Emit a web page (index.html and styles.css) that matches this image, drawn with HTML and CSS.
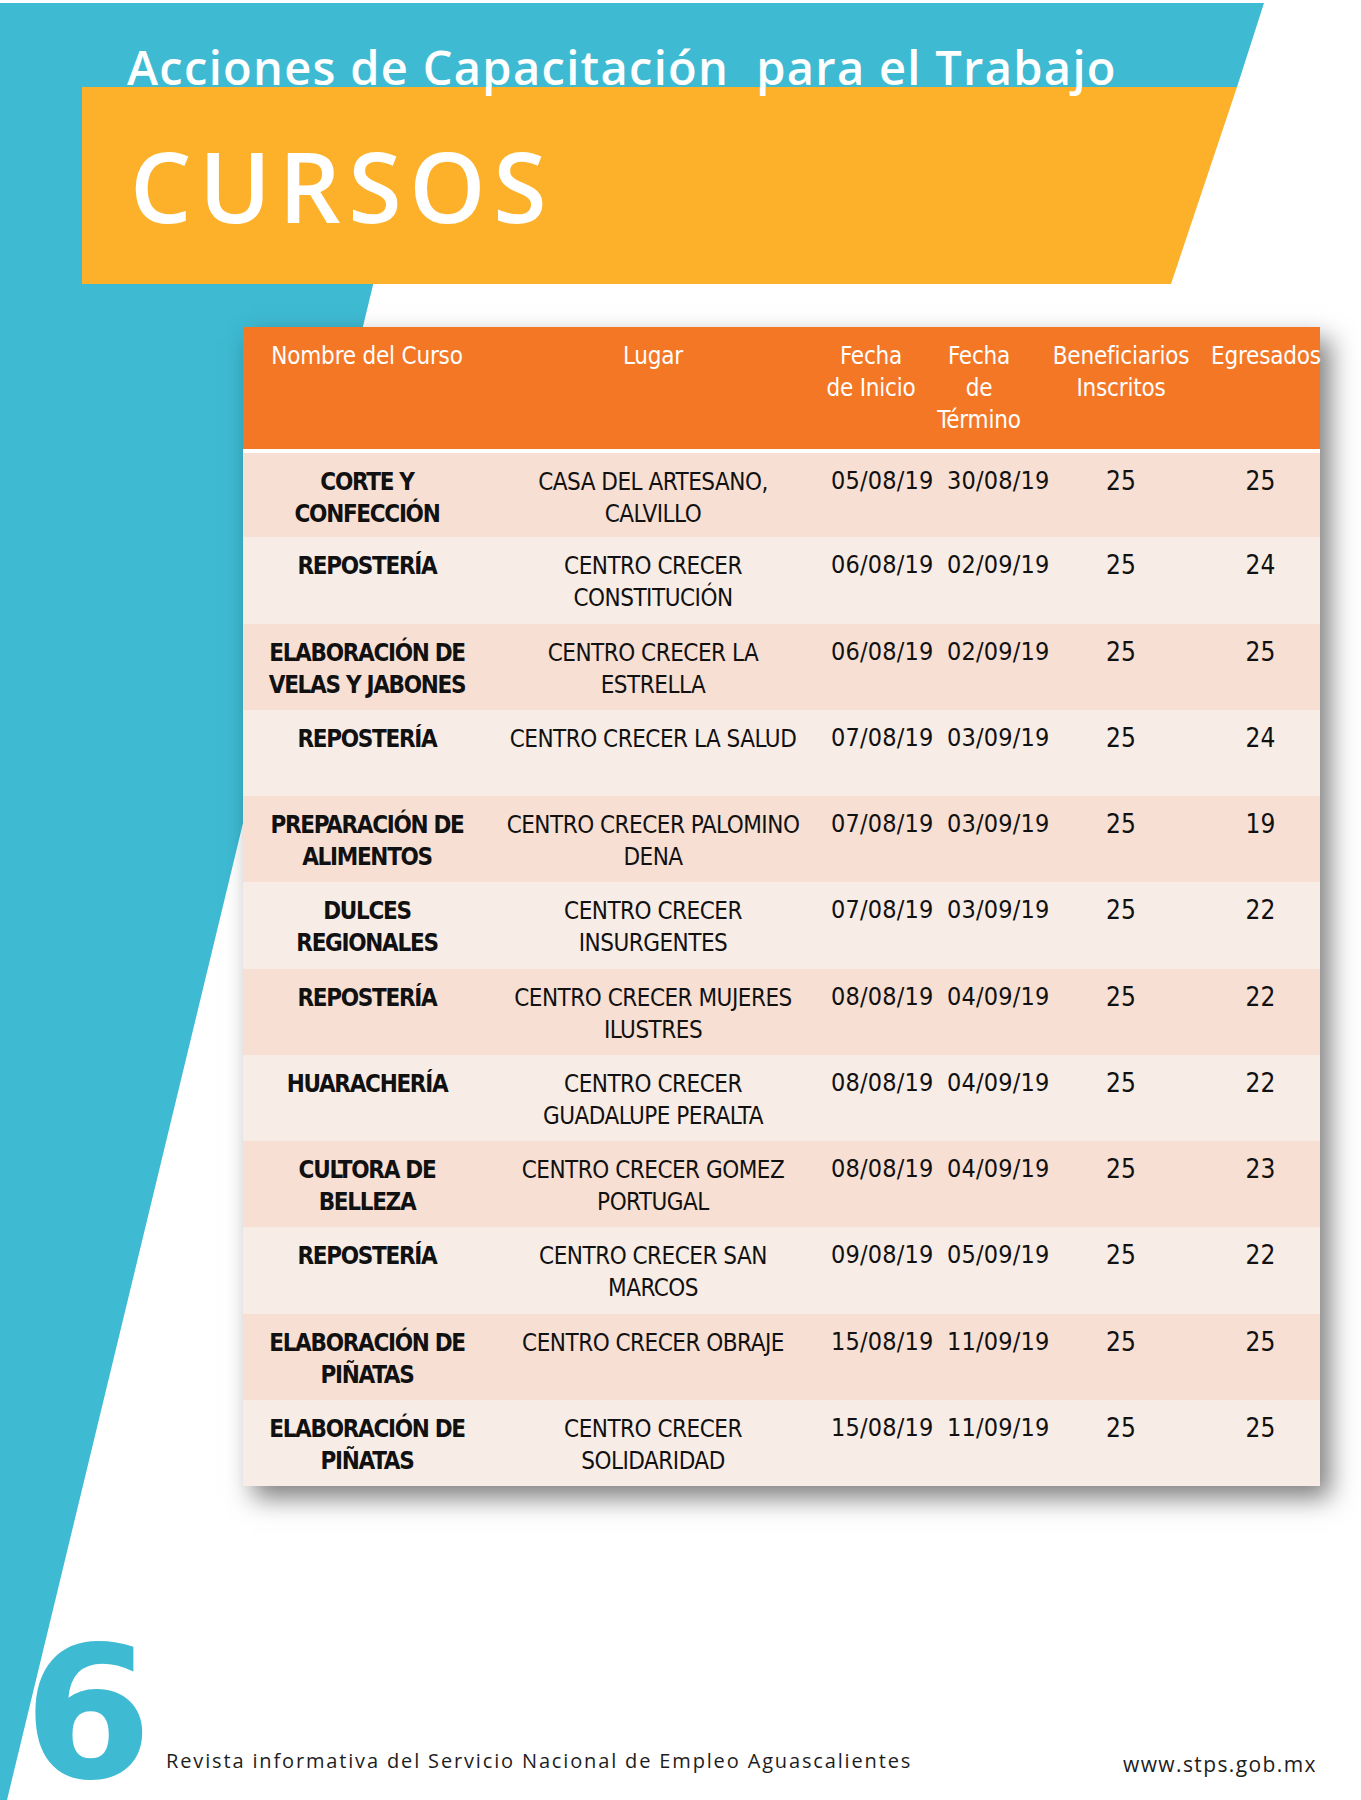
FILE: index.html
```html
<!DOCTYPE html>
<html lang="es">
<head>
<meta charset="utf-8">
<title>Cursos</title>
<link rel="stylesheet" href="styles.css">
</head>
<body>
<div class="page">
  <svg class="bg" width="1361" height="1800" viewBox="0 0 1361 1800" aria-hidden="true">
    <polygon class="bg-blue" points="0,3 1264,3 1237,87 1100,150 381,250 373,285 7,1800 0,1800"/>
    <polygon class="bg-yellow" points="82,87 1237,87 1171,284 82,284"/>
  </svg>

  <header class="masthead">
    <h2 class="kicker">Acciones de Capacitación&nbsp; para el Trabajo</h2>
    <h1 class="title">CURSOS</h1>
  </header>

  <table class="courses">
    <colgroup>
      <col class="c-name"><col class="c-place"><col class="c-start"><col class="c-end"><col class="c-ben"><col class="c-egr">
    </colgroup>
    <thead>
      <tr>
        <th>Nombre del Curso</th>
        <th>Lugar</th>
        <th>Fecha<br>de Inicio</th>
        <th>Fecha<br>de<br>Término</th>
        <th>Beneficiarios<br>Inscritos</th>
        <th>Egresados</th>
      </tr>
    </thead>
    <tbody>
      <tr><td class="name">CORTE Y<br>CONFECCIÓN</td><td class="place">CASA DEL ARTESANO,<br>CALVILLO</td><td class="d1">05/08/19</td><td class="d2">30/08/19</td><td class="num">25</td><td class="num egr">25</td></tr>
      <tr><td class="name">REPOSTERÍA</td><td class="place">CENTRO CRECER<br>CONSTITUCIÓN</td><td class="d1">06/08/19</td><td class="d2">02/09/19</td><td class="num">25</td><td class="num egr">24</td></tr>
      <tr><td class="name">ELABORACIÓN DE<br>VELAS Y JABONES</td><td class="place">CENTRO CRECER LA<br>ESTRELLA</td><td class="d1">06/08/19</td><td class="d2">02/09/19</td><td class="num">25</td><td class="num egr">25</td></tr>
      <tr><td class="name">REPOSTERÍA</td><td class="place">CENTRO CRECER LA SALUD</td><td class="d1">07/08/19</td><td class="d2">03/09/19</td><td class="num">25</td><td class="num egr">24</td></tr>
      <tr><td class="name">PREPARACIÓN DE<br>ALIMENTOS</td><td class="place">CENTRO CRECER PALOMINO<br>DENA</td><td class="d1">07/08/19</td><td class="d2">03/09/19</td><td class="num">25</td><td class="num egr">19</td></tr>
      <tr><td class="name">DULCES<br>REGIONALES</td><td class="place">CENTRO CRECER<br>INSURGENTES</td><td class="d1">07/08/19</td><td class="d2">03/09/19</td><td class="num">25</td><td class="num egr">22</td></tr>
      <tr><td class="name">REPOSTERÍA</td><td class="place">CENTRO CRECER MUJERES<br>ILUSTRES</td><td class="d1">08/08/19</td><td class="d2">04/09/19</td><td class="num">25</td><td class="num egr">22</td></tr>
      <tr><td class="name">HUARACHERÍA</td><td class="place">CENTRO CRECER<br>GUADALUPE PERALTA</td><td class="d1">08/08/19</td><td class="d2">04/09/19</td><td class="num">25</td><td class="num egr">22</td></tr>
      <tr><td class="name">CULTORA DE<br>BELLEZA</td><td class="place">CENTRO CRECER GOMEZ<br>PORTUGAL</td><td class="d1">08/08/19</td><td class="d2">04/09/19</td><td class="num">25</td><td class="num egr">23</td></tr>
      <tr><td class="name">REPOSTERÍA</td><td class="place">CENTRO CRECER SAN<br>MARCOS</td><td class="d1">09/08/19</td><td class="d2">05/09/19</td><td class="num">25</td><td class="num egr">22</td></tr>
      <tr><td class="name">ELABORACIÓN DE<br>PIÑATAS</td><td class="place">CENTRO CRECER OBRAJE</td><td class="d1">15/08/19</td><td class="d2">11/09/19</td><td class="num">25</td><td class="num egr">25</td></tr>
      <tr><td class="name">ELABORACIÓN DE<br>PIÑATAS</td><td class="place">CENTRO CRECER<br>SOLIDARIDAD</td><td class="d1">15/08/19</td><td class="d2">11/09/19</td><td class="num">25</td><td class="num egr">25</td></tr>
    </tbody>
  </table>

  <footer class="foot">
    <span class="page-num">6</span>
    <span class="mag">Revista informativa del Servicio Nacional de Empleo Aguascalientes</span>
    <span class="url">www.stps.gob.mx</span>
  </footer>
</div>
</body>
</html>
```

FILE: styles.css
```css
* { box-sizing: border-box; }

html, body {
  margin: 0;
  padding: 0;
  background: #ffffff;
}

.page {
  position: relative;
  width: 1361px;
  height: 1800px;
  overflow: hidden;
  display: flex;
  flex-direction: column;
  font-family: "Open Sans", "Noto Sans", sans-serif;
}

.bg {
  position: absolute;
  left: 0;
  top: 0;
  z-index: 0;
}

.bg-blue { fill: #3ebad3; }
.bg-yellow { fill: #fdb12b; }

.masthead {
  position: relative;
  z-index: 1;
  padding: 39px 0 0 0;
}

.kicker {
  margin: 0 0 0 127px;
  font-weight: 600;
  font-size: 47px;
  line-height: 56px;
  color: #ffffff;
  letter-spacing: 1.3px;
  white-space: nowrap;
}

.title {
  margin: 40px 0 0 130px;
  font-weight: 600;
  font-size: 97px;
  line-height: 100px;
  color: #ffffff;
  letter-spacing: 7.6px;
}

.courses {
  position: relative;
  z-index: 1;
  margin: 92px 0 0 243px;
  width: 1077px;
  table-layout: fixed;
  border-collapse: collapse;
  font-family: "DejaVu Sans Condensed", "Liberation Sans Narrow", "Arial Narrow", sans-serif;
  color: #111111;
  box-shadow: 10px 12px 24px rgba(0, 0, 0, 0.5);
}

.c-name { width: 248px; }
.c-place { width: 324px; }
.c-start { width: 112px; }
.c-end { width: 104px; }
.c-ben { width: 180px; }
.c-egr { width: 109px; }

.courses th {
  background: #f47726;
  color: #ffffff;
  font-weight: normal;
  font-size: 24px;
  line-height: 32px;
  letter-spacing: -0.2px;
  height: 124px;
  padding: 13px 0 0 0;
  vertical-align: top;
  text-align: center;
  white-space: nowrap;
  border-bottom: 4px solid #ffffff;
}

.courses th.wide { letter-spacing: 0.3px; }

.courses tbody tr { height: 86.25px; }
.courses tbody tr:nth-child(odd) { background: #f7dfd3; }
.courses tbody tr:nth-child(even) { background: #f8ece6; }

.courses td {
  padding: 13px 0 0 0;
  vertical-align: top;
  text-align: center;
  font-size: 24px;
  line-height: 32px;
  white-space: nowrap;
}

.courses td.name {
  font-weight: bold;
  letter-spacing: -1.3px;
}

.courses td.place {
  letter-spacing: -0.5px;
}

.courses td.d1,
.courses td.d2 {
  text-align: left;
  font-size: 25px;
  letter-spacing: 0.2px;
  padding-top: 12px;
}

.courses td.d1 { padding-left: 16px; }
.courses td.d2 { padding-left: 20px; }

.courses td.num {
  font-size: 26px;
  padding-top: 12px;
}
.courses td.egr { padding-right: 10px; }

.foot {
  position: relative;
  z-index: 1;
  margin-top: auto;
  display: flex;
  align-items: flex-end;
  padding: 0 44px 0 24px;
}

.page-num {
  font-family: "DejaVu Sans", sans-serif;
  font-weight: 700;
  font-size: 184px;
  line-height: 170px;
  color: #3ebad3;
  padding-bottom: 2px;
}

.mag {
  margin-left: 14px;
  font-size: 20px;
  line-height: 24px;
  letter-spacing: 1.85px;
  color: #1d1d1d;
  padding-bottom: 27px;
  white-space: nowrap;
}

.url {
  margin-left: auto;
  font-size: 21px;
  line-height: 24px;
  letter-spacing: 1.4px;
  color: #1d1d1d;
  padding-bottom: 24px;
  white-space: nowrap;
}
```
